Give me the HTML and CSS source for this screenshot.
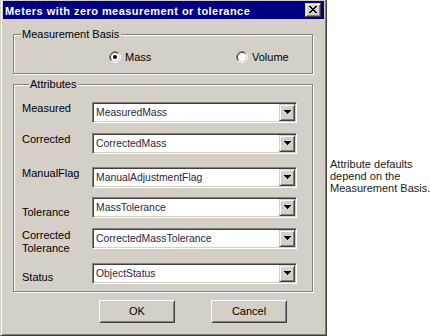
FILE: index.html
```html
<!DOCTYPE html>
<html>
<head>
<meta charset="utf-8">
<title>Meters with zero measurement or tolerance</title>
<link rel="stylesheet" href="styles.css">
</head>
<body>
<div class="screen">
  <div class="dialog">
    <div class="titlebar">
      <span class="title">Meters with zero measurement or tolerance</span>
      <span class="close-btn">
        <svg class="close-glyph" width="8" height="7" viewBox="0 0 8 7" shape-rendering="crispEdges">
          <rect x="0" y="0" width="2" height="1" fill="#000"/><rect x="6" y="0" width="2" height="1" fill="#000"/>
          <rect x="1" y="1" width="2" height="1" fill="#000"/><rect x="5" y="1" width="2" height="1" fill="#000"/>
          <rect x="2" y="2" width="4" height="1" fill="#000"/>
          <rect x="3" y="3" width="2" height="1" fill="#000"/>
          <rect x="2" y="4" width="4" height="1" fill="#000"/>
          <rect x="1" y="5" width="2" height="1" fill="#000"/><rect x="5" y="5" width="2" height="1" fill="#000"/>
          <rect x="0" y="6" width="2" height="1" fill="#000"/><rect x="6" y="6" width="2" height="1" fill="#000"/>
        </svg>
      </span>
    </div>
    <div class="client">
      <fieldset class="group group-basis">
        <legend>Measurement Basis</legend>
        <div class="radios">
          <div class="radio">
            <svg class="radio-icon" width="12" height="12" viewBox="0 0 12 12">
              <circle cx="6" cy="6" r="4.5" fill="#fff"/>
              <path d="M2.11 9.89A5.5 5.5 0 0 1 9.89 2.11" fill="none" stroke="#808080"/>
              <path d="M9.89 2.11A5.5 5.5 0 0 1 2.11 9.89" fill="none" stroke="#fff"/>
              <path d="M2.82 9.18A4.5 4.5 0 0 1 9.18 2.82" fill="none" stroke="#404040"/>
              <path d="M9.18 2.82A4.5 4.5 0 0 1 2.82 9.18" fill="none" stroke="#d4d0c8"/>
              <circle cx="6" cy="6" r="2" fill="#000"/>
            </svg>
            <span>Mass</span>
          </div>
          <div class="radio">
            <svg class="radio-icon" width="12" height="12" viewBox="0 0 12 12">
              <circle cx="6" cy="6" r="4.5" fill="#fff"/>
              <path d="M2.11 9.89A5.5 5.5 0 0 1 9.89 2.11" fill="none" stroke="#808080"/>
              <path d="M9.89 2.11A5.5 5.5 0 0 1 2.11 9.89" fill="none" stroke="#fff"/>
              <path d="M2.82 9.18A4.5 4.5 0 0 1 9.18 2.82" fill="none" stroke="#404040"/>
              <path d="M9.18 2.82A4.5 4.5 0 0 1 2.82 9.18" fill="none" stroke="#d4d0c8"/>
            </svg>
            <span>Volume</span>
          </div>
        </div>
      </fieldset>

      <fieldset class="group group-attrs">
        <legend>Attributes</legend>
        <div class="row row-31">
          <span class="field-label">Measured</span>
          <div class="combo"><span class="combo-text">MeasuredMass</span><span class="combo-btn"><svg class="arrow" width="7" height="4" viewBox="0 0 7 4" shape-rendering="crispEdges"><rect x="0" y="0" width="7" height="1"/><rect x="1" y="1" width="5" height="1"/><rect x="2" y="2" width="3" height="1"/><rect x="3" y="3" width="1" height="1"/></svg></span></div>
        </div>
        <div class="row row-34">
          <span class="field-label">Corrected</span>
          <div class="combo"><span class="combo-text">CorrectedMass</span><span class="combo-btn"><svg class="arrow" width="7" height="4" viewBox="0 0 7 4" shape-rendering="crispEdges"><rect x="0" y="0" width="7" height="1"/><rect x="1" y="1" width="5" height="1"/><rect x="2" y="2" width="3" height="1"/><rect x="3" y="3" width="1" height="1"/></svg></span></div>
        </div>
        <div class="row row-30">
          <span class="field-label">ManualFlag</span>
          <div class="combo"><span class="combo-text">ManualAdjustmentFlag</span><span class="combo-btn"><svg class="arrow" width="7" height="4" viewBox="0 0 7 4" shape-rendering="crispEdges"><rect x="0" y="0" width="7" height="1"/><rect x="1" y="1" width="5" height="1"/><rect x="2" y="2" width="3" height="1"/><rect x="3" y="3" width="1" height="1"/></svg></span></div>
        </div>
        <div class="row row-31">
          <span class="field-label label-low9">Tolerance</span>
          <div class="combo"><span class="combo-text">MassTolerance</span><span class="combo-btn"><svg class="arrow" width="7" height="4" viewBox="0 0 7 4" shape-rendering="crispEdges"><rect x="0" y="0" width="7" height="1"/><rect x="1" y="1" width="5" height="1"/><rect x="2" y="2" width="3" height="1"/><rect x="3" y="3" width="1" height="1"/></svg></span></div>
        </div>
        <div class="row row-35">
          <span class="field-label label-low1">Corrected<br>Tolerance</span>
          <div class="combo"><span class="combo-text">CorrectedMassTolerance</span><span class="combo-btn"><svg class="arrow" width="7" height="4" viewBox="0 0 7 4" shape-rendering="crispEdges"><rect x="0" y="0" width="7" height="1"/><rect x="1" y="1" width="5" height="1"/><rect x="2" y="2" width="3" height="1"/><rect x="3" y="3" width="1" height="1"/></svg></span></div>
        </div>
        <div class="row row-last">
          <span class="field-label label-low8">Status</span>
          <div class="combo"><span class="combo-text">ObjectStatus</span><span class="combo-btn"><svg class="arrow" width="7" height="4" viewBox="0 0 7 4" shape-rendering="crispEdges"><rect x="0" y="0" width="7" height="1"/><rect x="1" y="1" width="5" height="1"/><rect x="2" y="2" width="3" height="1"/><rect x="3" y="3" width="1" height="1"/></svg></span></div>
        </div>
      </fieldset>

      <div class="buttons">
        <div class="btn">OK</div>
        <div class="btn">Cancel</div>
      </div>
    </div>
  </div>
  <div class="note">Attribute defaults<br>depend on the<br>Measurement Basis.</div>
</div>
</body>
</html>
```

FILE: styles.css
```css
html, body {
  margin: 0;
  padding: 0;
  background: #fff;
}
body {
  width: 430px;
  height: 336px;
  overflow: hidden;
  font-family: "Liberation Sans", Arial, sans-serif;
  font-size: 11px;
  color: #000;
}
.screen {
  display: flex;
  align-items: flex-start;
}
.dialog {
  box-sizing: border-box;
  width: 327px;
  height: 336px;
  flex: none;
  background: #d4d0c8;
  border-left: 1px solid #d4d0c8;
  border-right: 1px solid #404040;
  border-bottom: 1px solid #404040;
  box-shadow: inset 1px 0 0 #fff, inset -1px -1px 0 #808080;
  padding: 1px 2px 2px 2px;
  display: flex;
  flex-direction: column;
}
.titlebar {
  flex: none;
  height: 18px;
  background: #000080;
  color: #fff;
  display: flex;
  align-items: flex-start;
}
.title {
  flex: 1;
  font-weight: bold;
  letter-spacing: 0.45px;
  line-height: 16px;
  padding: 2px 0 0 2px;
  white-space: nowrap;
}
.close-btn {
  box-sizing: border-box;
  width: 16px;
  height: 14px;
  margin: 2px 3px 0 0;
  padding: 2px 0 0 3px;
  background: #d4d0c8;
  border: 1px solid;
  border-color: #d4d0c8 #404040 #404040 #d4d0c8;
  box-shadow: inset 1px 1px 0 #fff, inset -1px -1px 0 #808080;
}
.close-glyph {
  display: block;
}
.client {
  flex: 1;
  padding: 0 11px 0 10px;
  display: flex;
  flex-direction: column;
}
.group {
  margin: 0;
  padding: 0;
  min-width: 0;
  border: 1px solid #808080;
  box-shadow: inset 1px 1px 0 #fff, 1px 1px 0 #fff;
}
legend {
  margin-left: 7px;
  padding: 0 2px 0 1px;
  line-height: 13px;
  font-size: 11px;
  background: #d4d0c8;
}
.group-basis {
  margin-top: 9px;
  padding: 8px 0;
}
.radios {
  display: grid;
  grid-template-columns: 127px auto;
  padding-left: 95px;
  height: 16px;
  align-items: center;
}
.radio {
  display: flex;
  align-items: center;
  gap: 4px;
  line-height: 13px;
}
.radio-icon {
  display: block;
  flex: none;
}
.group-attrs {
  margin-top: 4px;
  padding: 11px 0 7px 8px;
}
.row {
  display: flex;
  align-items: flex-start;
  height: 31px;
}
.row-34 { height: 34px; }
.row-30 { height: 30px; }
.row-35 { height: 35px; }
.row-last { height: 21px; }
.field-label {
  flex: none;
  width: 70px;
  line-height: 13px;
}
.label-low9 { padding-top: 9px; }
.label-low8 { padding-top: 8px; }
.label-low1 { padding-top: 1px; }
.combo {
  box-sizing: border-box;
  flex: none;
  width: 205px;
  height: 21px;
  padding: 1px;
  background: #fff;
  border: 1px solid;
  border-color: #808080 #fff #fff #808080;
  box-shadow: inset 1px 1px 0 #404040, inset -1px -1px 0 #d4d0c8;
  display: flex;
  align-items: center;
}
.combo-text {
  flex: 1;
  padding-left: 2px;
  font-size: 10.4px;
  line-height: 13px;
  color: #2b2540;
  white-space: nowrap;
  overflow: hidden;
}
.combo-btn {
  box-sizing: border-box;
  flex: none;
  width: 16px;
  height: 17px;
  padding: 5px 0 0 4px;
  background: #d4d0c8;
  border: 1px solid;
  border-color: #d4d0c8 #404040 #404040 #d4d0c8;
  box-shadow: inset 1px 1px 0 #fff, inset -1px -1px 0 #808080;
}
.arrow {
  display: block;
  fill: #000;
}
.buttons {
  display: flex;
  gap: 36px;
  padding-left: 86px;
  margin-top: 8px;
}
.btn {
  box-sizing: border-box;
  width: 76px;
  height: 23px;
  border: 1px solid;
  border-color: #fff #404040 #404040 #fff;
  box-shadow: inset 1px 1px 0 #d4d0c8, inset -1px -1px 0 #808080;
  display: flex;
  align-items: center;
  justify-content: center;
  line-height: 13px;
}
.note {
  margin: 158px 0 0 3px;
  line-height: 12px;
  white-space: nowrap;
  color: #1a1a1a;
}
```
